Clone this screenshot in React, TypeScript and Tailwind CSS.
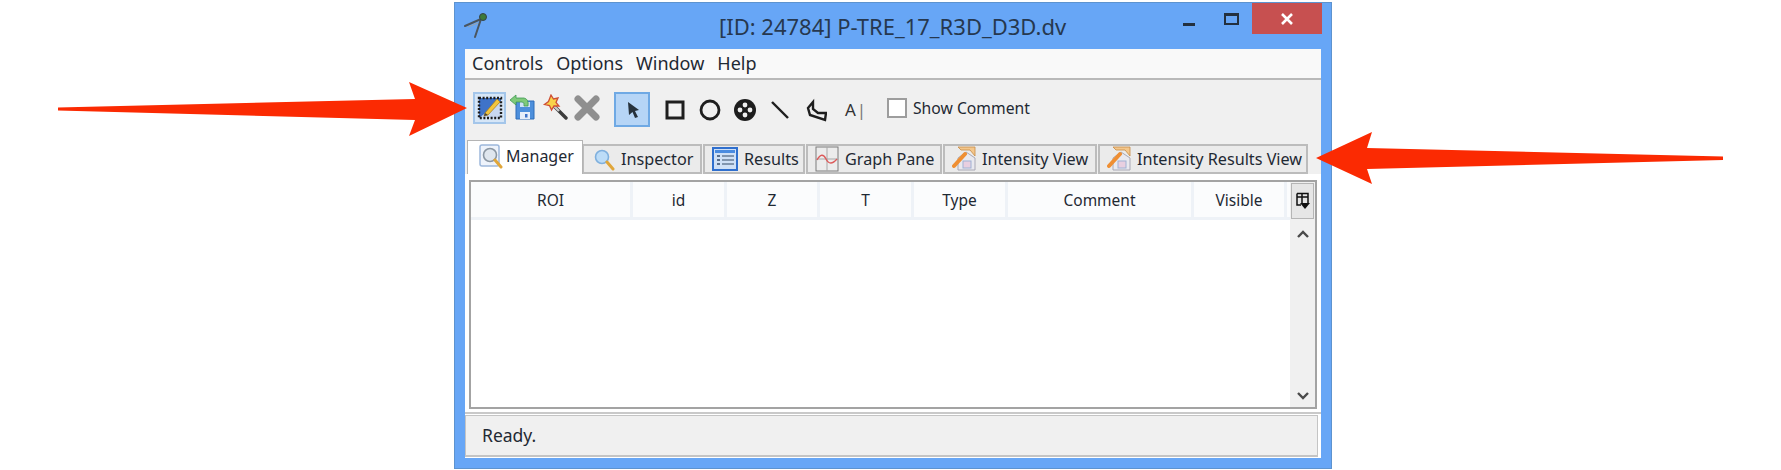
import type { ReactNode } from "react";

const columns = [
  { label: "ROI", width: "w-[162px]" },
  { label: "id", width: "w-[94px]" },
  { label: "Z", width: "w-[93px]" },
  { label: "T", width: "w-[94px]" },
  { label: "Type", width: "w-[94px]" },
  { label: "Comment", width: "w-[186px]" },
  { label: "Visible", width: "w-[93px]" },
];

function AppIcon() {
  return (
    <svg width="28" height="28" viewBox="0 0 28 28" fill="none">
      <path d="M1 14 L17 7 M17 7 L11 25" stroke="#4a5560" strokeWidth="2" strokeLinecap="round" />
      <path d="M4 15 L14 11" stroke="#9aa3aa" strokeWidth="1" />
      <circle cx="19" cy="5" r="3.5" fill="#3d7a3a" stroke="#35424a" />
    </svg>
  );
}

function EditIcon() {
  return (
    <svg width="26" height="26" viewBox="0 0 26 26">
      <rect x="2" y="3" width="22" height="20" fill="#3f73c9" />
      <path d="M2 23 L24 6 V23 Z" fill="#c9d8ef" />
      <rect x="2" y="3" width="22" height="20" fill="none" stroke="#1c1c1c" strokeWidth="2.4" strokeDasharray="2 1.6" />
      <path d="M8 18 L20 4 L23 7 L11 20 L7 21 Z" fill="#f2c53d" stroke="#a97a12" strokeWidth="0.7" />
      <path d="M7 21 L8 18 L11 20 Z" fill="#444" />
    </svg>
  );
}

function SaveIcon() {
  return (
    <svg width="26" height="26" viewBox="0 0 26 26">
      <path d="M7 7 H25 V25 H7 Z" fill="#4d8fdc" stroke="#2f6cb8" />
      <rect x="11" y="18" width="10" height="7" fill="#e7eefa" />
      <rect x="16" y="20" width="2.5" height="3.5" fill="#3f73c9" />
      <rect x="11" y="8" width="10" height="5" fill="#cfe2f8" />
      <path d="M1 6 L7 1 V4 H15 Q20 5 19 12 L15 12 Q16 8 13 8 H7 V11 Z" fill="#7fca7a" stroke="#3f9a54" strokeWidth="0.8" />
    </svg>
  );
}

function WandIcon() {
  return (
    <svg width="26" height="26" viewBox="0 0 26 26">
      <path d="M12 12 L24 24" stroke="#3c3c3c" strokeWidth="3.4" strokeLinecap="round" />
      <path d="M12 12 L17 17" stroke="#c9c9c9" strokeWidth="2.4" />
      <path d="M9 1 L11.5 5 L16 4 L14 8.5 L17 12 L12 12 L9.5 16 L7.5 11.5 L2.5 10.5 L6.5 7.5 Z" fill="#f8d34a" stroke="#cf4f34" strokeWidth="1.3" />
    </svg>
  );
}

function RemoveIcon() {
  return (
    <svg width="26" height="26" viewBox="0 0 26 26">
      <path d="M4 4 L22 22 M22 4 L4 22" stroke="#8f8f8f" strokeWidth="7" strokeLinecap="round" />
    </svg>
  );
}

function PointerIcon() {
  return (
    <svg width="14" height="18" viewBox="0 0 14 18">
      <path d="M1 1 L12 9 L8 10 L11 16 L8 17 L5.5 11 L2 14 Z" fill="#27323c" />
    </svg>
  );
}

function ShapeIcon({ children }: { children: ReactNode }) {
  return (
    <svg width="24" height="24" viewBox="0 0 24 24" fill="none" stroke="#1e1e1e">
      {children}
    </svg>
  );
}

function QuestionLens({ boxed }: { boxed?: boolean }) {
  return (
    <svg width="24" height="26" viewBox="0 0 24 26" fill="none">
      {boxed && <rect x="1" y="1" width="19" height="21" rx="2" fill="#eef3fb" stroke="#9db8dc" strokeWidth="1.5" />}
      <circle cx="11" cy="11" r="6.5" fill={boxed ? "#dfe6ee" : "#bcdcf7"} stroke={boxed ? "#8b97a3" : "#7fb0de"} strokeWidth="1.6" />
      <path d="M16 16 L22 23" stroke="#e0a63a" strokeWidth="3" strokeLinecap="round" />
    </svg>
  );
}

function ResultsIcon() {
  return (
    <svg width="26" height="24" viewBox="0 0 26 24">
      <rect x="1" y="1" width="24" height="22" fill="#cfe0f6" stroke="#2f6fce" strokeWidth="2" />
      <rect x="3" y="3" width="20" height="3" fill="#4a8be0" />
      <path d="M5 9 H8 M5 13 H8 M5 17 H8" stroke="#5a6f8c" strokeWidth="2" />
      <path d="M10 9 H22 M10 13 H22 M10 17 H22" stroke="#8195ae" strokeWidth="2" />
    </svg>
  );
}

function GraphIcon() {
  return (
    <svg width="24" height="26" viewBox="0 0 24 26" fill="none">
      <rect x="1" y="1" width="22" height="24" fill="#ececec" stroke="#7d7d7d" />
      <path d="M1 13 H23 M12 1 V25" stroke="#a8a8a8" />
      <path d="M2 14 Q7 5 11 13 T22 13" stroke="#dc5a5a" strokeWidth="1.4" />
    </svg>
  );
}

function IntensityIcon() {
  return (
    <svg width="24" height="26" viewBox="0 0 24 26" fill="none">
      <path d="M6 24 V12 L14 6 L23 12 V24 Z" fill="#e9e9ef" stroke="#a9a9b6" />
      <rect x="11" y="15" width="8" height="7" fill="#e8cfe0" stroke="#9fb2d4" />
      <path d="M6 1 H23 V10 L18 4 H9 Z" fill="#f4c78c" stroke="#c68a45" strokeWidth="0.8" />
      <path d="M2 20 L13 8" stroke="#ef8f33" strokeWidth="4" strokeLinecap="round" />
    </svg>
  );
}

function ColumnControlIcon() {
  return (
    <svg width="16" height="18" viewBox="0 0 16 18" fill="none">
      <path d="M2 1.5 H13 V11 M2 1.5 V13 H6 M2 5 H13 M7 1.5 V11" stroke="#111" strokeWidth="1.5" />
      <path d="M5 11 H15 L10 17 Z" fill="#111" />
    </svg>
  );
}

function Tab({ icon, label, width }: { icon: ReactNode; label: string; width: string }) {
  return (
    <div className={`${width} flex h-[30px] items-center gap-[6px] border-2 border-[#bcbcbc] bg-[#ebebeb] pl-[7px] text-[16.2px]`}>
      {icon}
      <span className="whitespace-nowrap">{label}</span>
    </div>
  );
}

export default function App() {
  return (
    <div className="relative h-[470px] w-[1781px] overflow-hidden bg-white pl-[454px] pt-[2px] font-['Noto_Sans',sans-serif] text-[15.5px] text-[#1f2933]">
      <div className="flex h-[467px] w-[878px] flex-col border border-[#5d93cf] bg-[#67a6f6] pl-[10px] pr-[10px]">
        {/* title bar */}
        <div className="flex h-[46px] shrink-0 items-start">
          <div className="ml-[-1px] mt-[9px]">
            <AppIcon />
          </div>
          <div className="ml-[227px] mt-[8px] whitespace-nowrap text-[22px] leading-[30px] text-[#26384f]">
            [ID: 24784] P-TRE_17_R3D_D3D.dv
          </div>
          <div className="ml-auto mr-[-1px] flex items-start">
            <div className="mr-[29px] mt-[20px] h-[3px] w-[12px] bg-[#23303f]" />
            <div className="mr-[13px] mt-[10px] h-[12px] w-[15px] border-2 border-t-[3px] border-[#23303f]" />
            <div className="flex h-[31px] w-[70px] items-center justify-center bg-[#c75050]">
              <svg width="14" height="14" viewBox="0 0 14 14">
                <path d="M2 2 L12 12 M12 2 L2 12" stroke="#fff" strokeWidth="2.6" />
              </svg>
            </div>
          </div>
        </div>

        {/* content */}
        <div className="flex min-h-0 flex-1 flex-col bg-[#f0f0f0]">
          <div className="flex h-[31px] shrink-0 items-center gap-[13px] border-b-2 border-[#b9b9b9] bg-[#f9f9f9] pl-[7px] text-[18px]">
            <span>Controls</span>
            <span>Options</span>
            <span>Window</span>
            <span>Help</span>
          </div>

          <div className="flex h-[60px] shrink-0 items-start pl-[8px] pt-[12px]">
            <div className="flex h-[32px] w-[33px] items-center justify-center border-2 border-[#a4c6ea] bg-[#d6e6f7]">
              <EditIcon />
            </div>
            <div className="ml-[3px] mt-[2px]">
              <SaveIcon />
            </div>
            <div className="ml-[7px] mt-[2px]">
              <WandIcon />
            </div>
            <div className="ml-[6px] mt-[3px]">
              <RemoveIcon />
            </div>
            <div className="ml-[14px] flex h-[35px] w-[36px] items-center justify-center border-2 border-[#6fa9e4] bg-[#b6d5f6] pl-[4px]">
              <PointerIcon />
            </div>
            <div className="ml-[13px] mt-[5px] flex items-center gap-[11px]">
              <ShapeIcon>
                <rect x="4" y="4" width="16" height="16" strokeWidth="3" />
              </ShapeIcon>
              <ShapeIcon>
                <circle cx="12" cy="12" r="9" strokeWidth="2.8" />
              </ShapeIcon>
              <ShapeIcon>
                <circle cx="12" cy="12" r="11" fill="#1e1e1e" stroke="none" />
                <circle cx="12" cy="7" r="2.4" fill="#f0f0f0" stroke="none" />
                <circle cx="12" cy="17" r="2.4" fill="#f0f0f0" stroke="none" />
                <circle cx="7" cy="12" r="2.4" fill="#f0f0f0" stroke="none" />
                <circle cx="17" cy="12" r="2.4" fill="#f0f0f0" stroke="none" />
              </ShapeIcon>
              <ShapeIcon>
                <path d="M4 4 L20 20" strokeWidth="2.4" />
              </ShapeIcon>
              <ShapeIcon>
                <path d="M10 4 L5 10 L7 17 L22 22 L23 15 L15 15 L10 11 Z" strokeWidth="2.4" />
              </ShapeIcon>
              <span className="ml-[4px] flex w-[24px] items-center justify-center pl-[3px] text-[17px] text-[#333]">
                A<span className="ml-[1px] text-[#777]">|</span>
              </span>
            </div>
            <div className="ml-[21px] mt-[6px] h-[20px] w-[20px] border-2 border-[#9d9d9d] bg-white" />
            <span className="ml-[6px] mt-[4px] whitespace-nowrap text-[15.7px] leading-[24px]">Show Comment</span>
          </div>

          {/* tabs */}
          <div className="relative flex h-[34px] shrink-0 items-end gap-[1px] pl-[2px]">
            <div className="z-10 mr-[-2px] flex h-[34px] w-[116px] items-start gap-[3px] border border-b-0 border-[#b4b4b4] bg-white pl-[11px] pt-[3px] text-[16px]">
              <QuestionLens boxed />
              <span>Manager</span>
            </div>
            <Tab icon={<QuestionLens />} label="Inspector" width="w-[120px]" />
            <Tab icon={<ResultsIcon />} label="Results" width="w-[102px]" />
            <Tab icon={<GraphIcon />} label="Graph Pane" width="w-[136px]" />
            <Tab icon={<IntensityIcon />} label="Intensity View" width="w-[154px]" />
            <Tab icon={<IntensityIcon />} label="Intensity Results View" width="w-[210px]" />
          </div>

          {/* table */}
          <div className="flex min-h-0 flex-1 flex-col bg-white px-[4px] pb-[3px] pt-[6px]">
            <div className="flex min-h-0 flex-1 border-2 border-[#a3a3a3] bg-white">
              <div className="flex h-[38px] flex-1 border-b-[3px] border-[#eef2f7] bg-[#fbfcfd]">
                {columns.map((col) => (
                  <div key={col.label} className={`${col.width} flex items-center justify-center border-r-[3px] border-[#eef2f7] pt-[2px]`}>
                    {col.label}
                  </div>
                ))}
              </div>
              <div className="flex w-[25px] shrink-0 flex-col items-center bg-[#f0f0f0]">
                <div className="mt-[1px] flex h-[36px] w-[23px] items-center justify-center border border-[#b5b5b5] bg-[#e6e6e6]">
                  <ColumnControlIcon />
                </div>
                <svg className="mt-[11px]" width="12" height="9" viewBox="0 0 12 9" fill="none">
                  <path d="M1 7 L6 2 L11 7" stroke="#4a4a4a" strokeWidth="2.4" />
                </svg>
                <svg className="mb-[7px] mt-auto" width="12" height="9" viewBox="0 0 12 9" fill="none">
                  <path d="M1 2 L6 7 L11 2" stroke="#4a4a4a" strokeWidth="2.4" />
                </svg>
              </div>
            </div>
          </div>

          {/* status */}
          <div className="flex h-[46px] shrink-0 items-center border-t-2 border-t-[#c9c9c9] bg-white pr-[3px]">
            <div className="flex h-[42px] flex-1 items-center border-b-2 border-l border-r border-t border-[#c4c4c4] bg-[#f0f0f0] pl-[16px] text-[17.5px]">
              Ready.
            </div>
          </div>
        </div>
        <div className="h-[10px] shrink-0" />
      </div>

      {/* annotation arrows */}
      <svg className="pointer-events-none absolute left-0 top-0" width="1781" height="470">
        <path d="M58 107.5 L415 99 L409 82 L467 108 L409 136 L415 120 L58 110.5 Z" fill="#fb2a02" />
        <path d="M1723 156.5 L1367 148 L1372 132 L1316 158 L1372 184 L1367 169 L1723 160 Z" fill="#fb2a02" />
      </svg>
    </div>
  );
}
